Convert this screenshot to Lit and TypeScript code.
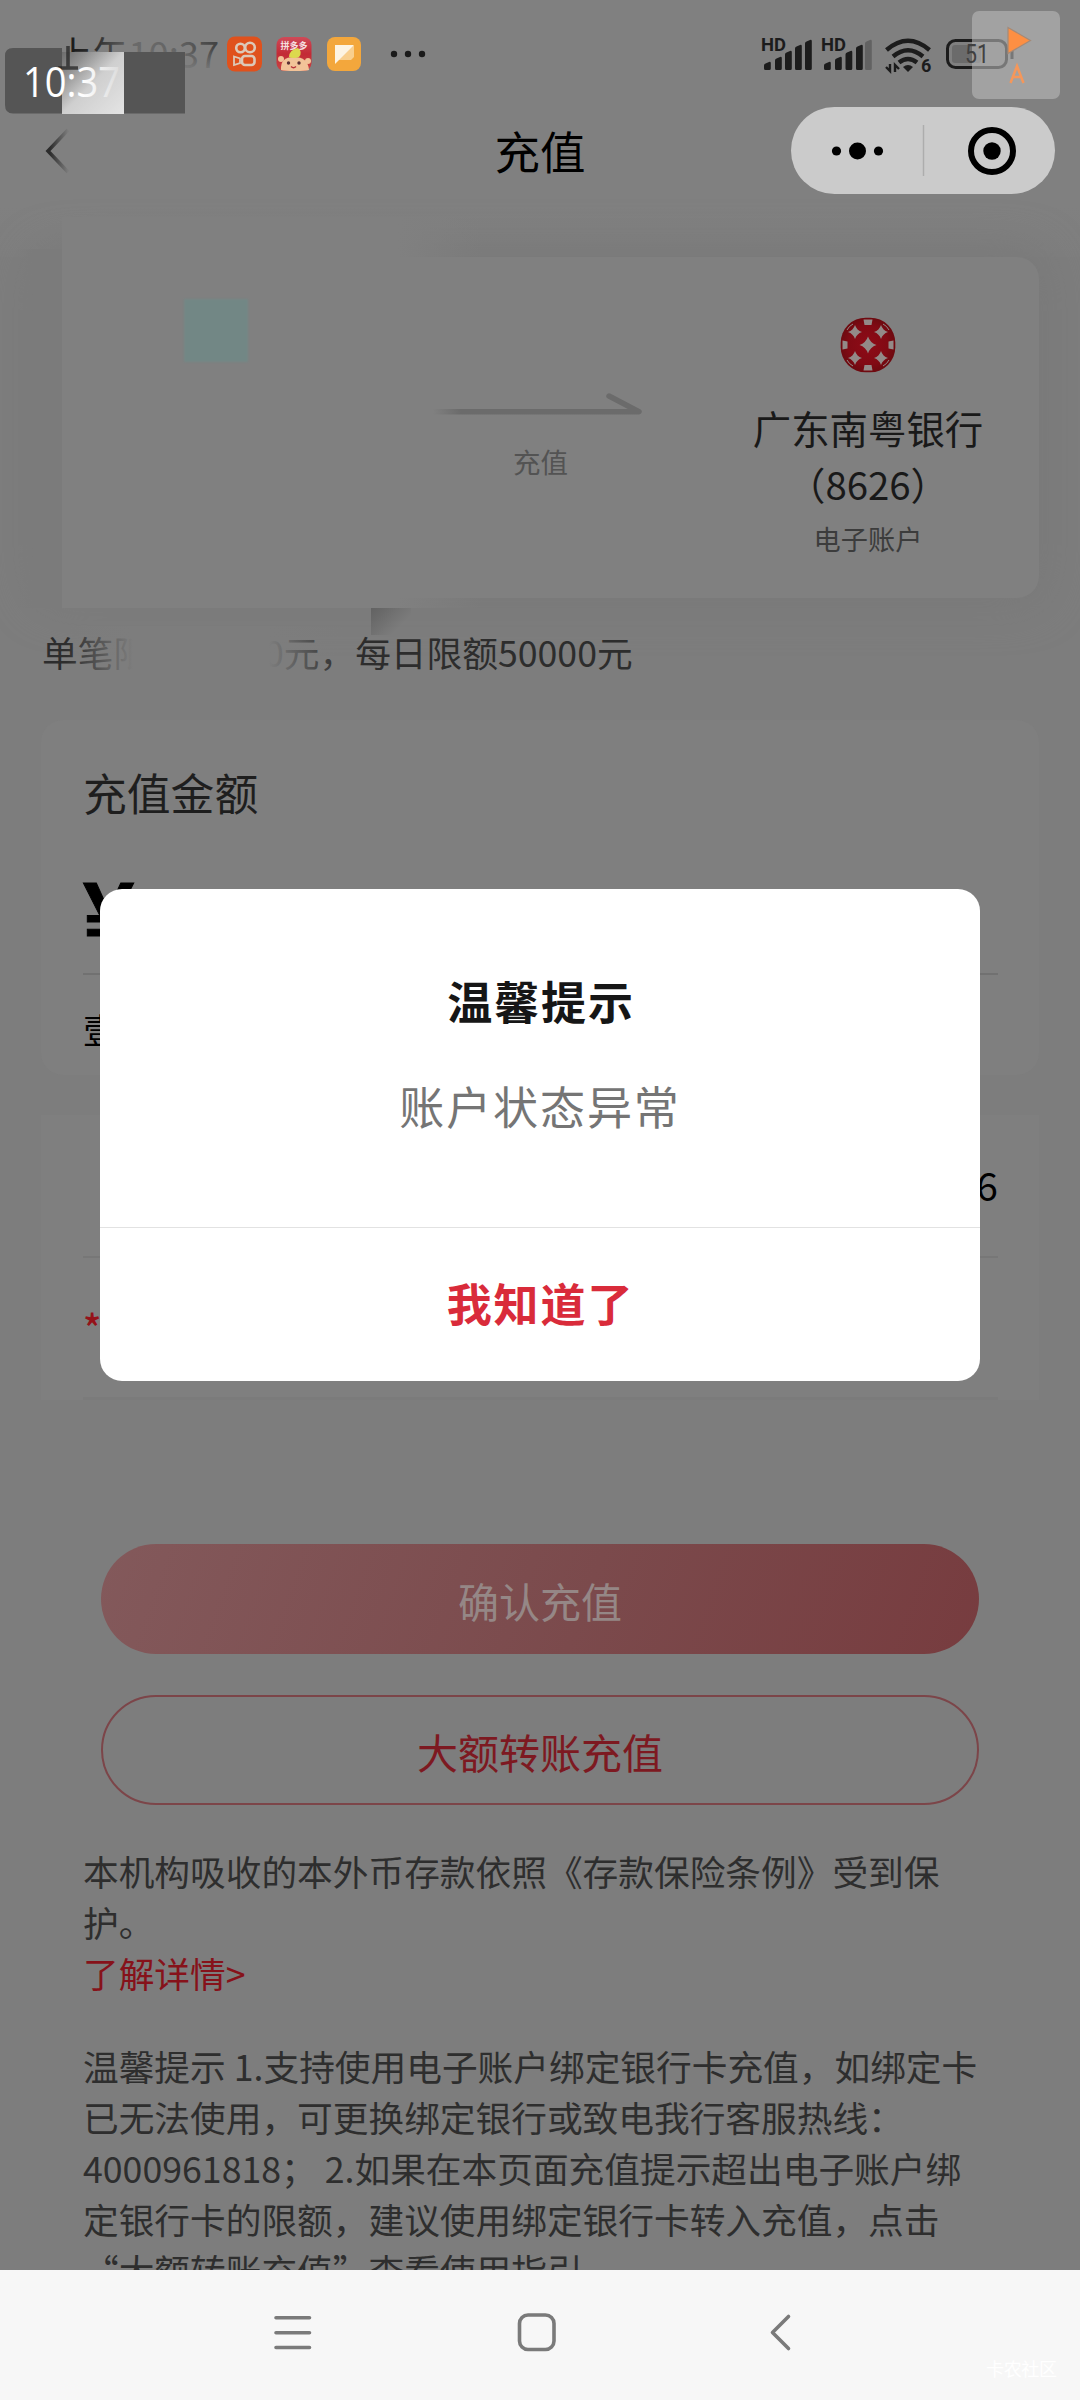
import { LitElement, html, css, svg } from "lit";
import { customElement } from "lit/decorators.js";

const bars = (x: number, widths: number[], faded: boolean) =>
  widths.map((dx, i) => {
    const top = [62, 57, 51, 45, 40][i];
    return svg`<path d="M${x + dx} 68.5V${top + 3.5}q0-1.5 1.5-2l3.5-1.5q1.8-.6 1.8 1.2v${68.5 - top - 1.2}q0 1.5-1.5 1.5h-3.8q-1.5 0-1.5-1.5z" fill=${faded && i === 4 ? "#626262" : "#1c1c1c"} />`;
  });

@customElement("status-bar")
export class StatusBar extends LitElement {
  static styles = css`
    :host { display: block; height: 106px; }
    svg { display: block; }
    text { font-family: Roboto, "Noto Sans CJK SC", sans-serif; }
    .clock { font: 36px "Noto Sans CJK SC", sans-serif; }
    .badge { font: 42px "Open Sans", "Noto Sans", sans-serif; }
    .hd { font: bold 18px Roboto, sans-serif; }
    .tiny { font: bold 9.5px "Noto Sans CJK SC", sans-serif; }
    .num { font: bold 18px Roboto, sans-serif; }
    .level { font: 25.5px Roboto, sans-serif; }
  `;
  render() {
    return html`
      <svg width="1080" height="120" viewBox="0 0 1080 120">
        <defs>
          <linearGradient id="clock" gradientUnits="userSpaceOnUse" x1="60" y1="0" x2="215" y2="0">
            <stop offset="0" stop-color="#111" /><stop offset=".25" stop-color="#333" />
            <stop offset=".48" stop-color="#6a6a6a" /><stop offset=".75" stop-color="#646464" /><stop offset="1" stop-color="#444" />
          </linearGradient>
          <linearGradient id="fade" x1="0" y1="0" x2="0" y2="1">
            <stop offset="0" stop-color="#808080" stop-opacity="0" /><stop offset="1" stop-color="#808080" />
          </linearGradient>
          <linearGradient id="patch" x1="0" y1="0" x2="1" y2="1">
            <stop offset="0" stop-color="#6c6c6c" /><stop offset=".2" stop-color="#8e8e8e" />
            <stop offset=".5" stop-color="#cfcfcf" /><stop offset="1" stop-color="#e4e4e4" />
          </linearGradient>
          <linearGradient id="badge" gradientUnits="userSpaceOnUse" x1="24" y1="0" x2="120" y2="0">
            <stop offset=".6" stop-color="#fff" /><stop offset="1" stop-color="#dcdcdc" />
          </linearGradient>
          <linearGradient id="pdd" x1="0" y1="0" x2="0" y2="1">
            <stop offset="0" stop-color="#cf4a58" /><stop offset=".5" stop-color="#c32a35" /><stop offset="1" stop-color="#c94545" />
          </linearGradient>
        </defs>
        <text class="clock" x="56" y="68" textLength="163" lengthAdjust="spacingAndGlyphs" fill="url(#clock)">上午10:37</text>
        <rect x="124" y="48" width="96" height="26" fill="url(#fade)" />
        <path d="M13 48H62V52H185V113.5H13Q5 113.5 5 105V56Q5 48 13 48z" fill="#555" />
        <rect x="62" y="52" width="62" height="62" fill="url(#patch)" />
        <path d="M68 46V67M58 68H78" stroke="#242424" stroke-width="3.600" fill="none" opacity=".75" />
        <text class="badge" x="23" y="96.500" textLength="97" lengthAdjust="spacingAndGlyphs" fill="url(#badge)">10:37</text>

        <rect x="227" y="36.500" width="35" height="35" rx="8" fill="#e0511c" />
        <g fill="none" stroke="#dcc9b8" stroke-width="2.600">
          <circle cx="240.500" cy="48" r="4.300" /><circle cx="250" cy="47.500" r="4.800" />
          <rect x="242" y="56" width="12.500" height="9" rx="3" />
        </g>
        <path d="M234 56.500l6 2v4.500l-6 2z" fill="none" stroke="#dcc9b8" stroke-width="1.800" />

        <rect x="276.500" y="37" width="35" height="34" rx="8" fill="url(#pdd)" />
        <text class="tiny" x="280.500" y="49" textLength="27" lengthAdjust="spacingAndGlyphs" fill="#f5dfe0">拼多多</text>
        <path d="M281 70q-1-13 13-13t15 13q-3 1-14 1t-14-1z" fill="#f2c398" />
        <circle cx="281" cy="59" r="3" fill="#f2c398" /><circle cx="308" cy="61" r="3" fill="#f2c398" />
        <path d="M289 57q0-7 9-9q5 4 1 9q-5 2-10 0z" fill="#dcd94e" />
        <circle cx="288.500" cy="63" r="1.700" fill="#5b3034" /><circle cx="299" cy="63" r="1.700" fill="#5b3034" />
        <path d="M291 66.500q2.500 2.500 5 0" stroke="#b7323a" stroke-width="1.300" fill="none" />

        <rect x="327" y="37" width="34" height="34" rx="8" fill="#f3a73c" />
        <path d="M335 46h19v11l-3 3h-16z" fill="#f9cf8e" /><path d="M335 45h19L335 64z" fill="#fdf4e3" />
        <g fill="#1a1a1a"><circle cx="394" cy="54" r="3.200" /><circle cx="408" cy="54" r="3.200" /><circle cx="422" cy="54" r="3.200" /></g>

        <text class="hd" x="761" y="50.500" textLength="25" lengthAdjust="spacingAndGlyphs" fill="#1c1c1c">HD</text>
        ${bars(764, [0, 11, 21, 31, 41], false)}
        <text class="hd" x="821" y="50.500" textLength="25" lengthAdjust="spacingAndGlyphs" fill="#1c1c1c">HD</text>
        ${bars(824, [0, 11, 21.5, 32, 41], true)}
        <g fill="none" stroke="#1c1c1c" stroke-width="4.400">
          <path d="M886.500 50q21.500-18.500 43 0" /><path d="M893 56.500q15-12.500 30 0" /><path d="M899 62.500q9-7 18 0" />
        </g>
        <path d="M903 67q5-4 10 0l-5 5z" fill="#1c1c1c" />
        <path d="M890 64v7l-4-4M895 72v-7l4 4" stroke="#1c1c1c" stroke-width="2.400" fill="none" />
        <text class="num" x="921" y="72" fill="#1c1c1c">6</text>
        <rect x="947.500" y="40.500" width="59" height="27" rx="8" fill="none" stroke="#1c1c1c" stroke-width="3" />
        <rect x="952" y="45" width="29" height="18" rx="3" fill="#6b6b6b" />
        <path d="M1012 50v9" stroke="#1c1c1c" stroke-width="3" />

        <rect x="972" y="11" width="88" height="88" rx="7" fill="#bababa" fill-opacity=".58" />
        <text class="level" x="965" y="63" textLength="24" lengthAdjust="spacingAndGlyphs" fill="#404040">51</text>
        <path d="M1008 27.500v26l22.500-13z" fill="#fd8f43" stroke="#a48a78" stroke-width="1.200" />
        <path d="M1010.500 83l6.500-17 6.500 17M1013 77h8" fill="none" stroke="#f5975a" stroke-width="2.500" />
      </svg>`;
  }
}

@customElement("nav-header")
export class NavHeader extends LitElement {
  static styles = css`
    :host { display: grid; grid-template-columns: 1fr auto 1fr; align-items: center; height: 89px; padding: 0 25px 0 42px; }
    .title { font-size: 45.500px; line-height: 60px; color: #000; margin: -2px 17px 0 0; }
    svg { display: block; }
    .back { margin-left: 2px; }
    .capsule { justify-self: end; width: 264px; height: 87px; border-radius: 44px; background: #cbcbcb; }
  `;
  render() {
    return html`
      <svg class="back" width="30" height="50" viewBox="0 0 30 50">
        <defs><linearGradient id="g"><stop offset=".1" stop-color="#2c2c2c" /><stop offset="1" stop-color="#7c7c7c" /></linearGradient></defs>
        <path d="M24 4L4 25l20 21" fill="none" stroke="url(#g)" stroke-width="3.600" />
      </svg>
      <div class="title">充值</div>
      <div class="capsule">
        <svg width="264" height="87" viewBox="0 0 264 87">
          <circle cx="45.500" cy="44" r="4.600" /><circle cx="66.500" cy="44" r="8.500" /><circle cx="87.500" cy="44" r="4.600" />
          <path d="M132.500 18v51" stroke="#adadad" stroke-width="1.500" />
          <circle cx="201" cy="44" r="21" fill="none" stroke="#000" stroke-width="6" /><circle cx="201" cy="44" r="8.700" />
        </svg>
      </div>`;
  }
}

@customElement("bank-card")
export class BankCard extends LitElement {
  static styles = css`
    :host { display: grid; flex: none; grid-template-columns: 368px 270px 1fr; height: 341px; margin: 0 41px; border-radius: 22px; background: #808080; box-shadow: 0 0 44px 6px #797979; position: relative; }
    .edge { position: absolute; left: -24px; top: -8px; width: 45px; height: 359px; background: linear-gradient(90deg, #7b7b7b00, #7b7b7b 35%); }
    .cover { position: absolute; left: 21px; top: -40px; width: 420px; height: 391px; background: linear-gradient(90deg, #808080 80%, #80808000); }
    .swatch { position: absolute; left: 143px; top: 42px; width: 64px; height: 63px; background: #728785; filter: blur(1px); }
    .smudge { position: absolute; left: 330px; top: 351px; width: 40px; height: 27px; background: linear-gradient(135deg, #626262, #79797900 70%); }
    .middle { position: relative; grid-column: 2; display: flex; flex-direction: column; align-items: center; padding-top: 133px; }
    .middle svg { margin-left: -11px; }
    .caption { font-size: 27.500px; line-height: 40px; color: #535353; margin-top: 21px; margin-left: -7px; }
    .bank { position: relative; display: flex; flex-direction: column; align-items: center; padding: 60px 0 0 18px; text-align: center; }
    .name { font-size: 38.400px; line-height: 55.500px; color: #191919; margin-top: 27px; }
    .kind { font-size: 27.200px; line-height: 40px; color: #3c3c3c; margin-top: 7px; }
    svg { display: block; }
  `;
  render() {
    const star = (x: number, y: number, r: number) =>
      svg`<path d="M${x} ${y - r}Q${x + r * 0.25} ${y - r * 0.25} ${x + r} ${y}Q${x + r * 0.25} ${y + r * 0.25} ${x} ${y + r}Q${x - r * 0.25} ${y + r * 0.25} ${x - r} ${y}Q${x - r * 0.25} ${y - r * 0.25} ${x} ${y - r}z" />`;
    return html`
      <div class="edge"></div><div class="cover"></div><div class="swatch"></div><div class="smudge"></div>
      <div class="middle">
        <svg width="212" height="30" viewBox="0 0 212 30">
          <defs><linearGradient id="a" gradientUnits="userSpaceOnUse" x1="0" y1="0" x2="28" y2="0"><stop offset="0" stop-color="#808080" /><stop offset="1" stop-color="#6b6b6b" /></linearGradient></defs>
          <path d="M176 6l30 15.700H0" fill="none" stroke="url(#a)" stroke-width="5.500" stroke-linecap="round" stroke-linejoin="round" />
        </svg>
        <div class="caption">充值</div>
      </div>
      <div class="bank">
        <svg width="56" height="56" viewBox="0 0 56 56">
          <defs><radialGradient id="r"><stop offset="0" stop-color="#8e0b17" /><stop offset=".7" stop-color="#820a14" /><stop offset="1" stop-color="#6e0a10" /></radialGradient></defs>
          <rect x=".7" y=".7" width="54.600" height="54.600" rx="25" fill="url(#r)" />
          <g fill="#938a88">
            ${star(28, 28, 8.5)} ${star(15, 15, 7)} ${star(41, 15, 7)} ${star(15, 41, 7)} ${star(41, 41, 7)}
            <path d="M23.500 2.500h9l-1 5.500h-7zM23.500 53.500h9l-1-5.500h-7zM2.500 23.500v9l5-1v-7zM53.500 23.500v9l-5-1v-7z" />
          </g>
          <g fill="none" stroke="#938a88" stroke-width="1"><path d="M7 13q2-4 6-6M49 13q-2-4-6-6M7 43q2 4 6 6M49 43q-2 4-6 6" /></g>
        </svg>
        <div class="name">广东南粤银行<br />（8626）</div>
        <div class="kind">电子账户</div>
      </div>`;
  }
}

@customElement("tip-dialog")
export class TipDialog extends LitElement {
  static styles = css`
    :host { display: flex; flex-direction: column; text-align: center; letter-spacing: 1.900px; font-size: 45px; border-radius: 22px; background: #fff; overflow: hidden; }
    .body { height: 339px; box-sizing: border-box; padding-top: 77px; border-bottom: 1.500px solid #e2e2e2; }
    .title { font-weight: 700; color: #161616; line-height: 70px; padding-left: 2px; }
    .message { color: #757575; line-height: 70px; margin-top: 35px; }
    .ok { flex: 1; font-weight: 700; color: #d92b3a; line-height: 149px; padding-left: 1px; }
  `;
  render() {
    return html`<div class="body"><div class="title">温馨提示</div><div class="message">账户状态异常</div></div><div class="ok">我知道了</div>`;
  }
}

@customElement("system-nav")
export class SystemNav extends LitElement {
  static styles = css`
    :host { display: block; height: 130px; background: #f7f7f7; }
    svg { display: block; }
    text { font: 18px "Noto Sans CJK SC", sans-serif; }
  `;
  render() {
    return html`
      <svg width="1080" height="130" viewBox="0 0 1080 130">
        <g fill="none" stroke="#7a7a7a" stroke-width="3.600" stroke-linecap="round" stroke-linejoin="round">
          <path d="M276 47.700h33.500M276 62.700h33.500M276 77.500h33.500" />
          <rect x="519.500" y="45" width="34.500" height="34.500" rx="8.500" />
          <path d="M788.500 46.500L772.500 62.500l16 16" />
        </g>
        <text x="986" y="106" textLength="71" fill="#fff">卡农社区</text>
      </svg>`;
  }
}

@customElement("app-root")
export class AppRoot extends LitElement {
  static styles = css`
    :host { display: block; position: relative; width: 1080px; height: 2400px; overflow: hidden; font-family: "Noto Sans CJK SC", sans-serif; background: #7d7d7d; }
    .screen { display: flex; flex-direction: column; height: 2270px; overflow: hidden; }
    .top { height: 257px; flex: none; box-sizing: border-box; background: linear-gradient(#808080 80%, #7e7e7e); }
    .limit { position: relative; flex: none; margin: 29px 0 0 42px; height: 50px; font-size: 35.700px; line-height: 50px; color: #2d2d2d; white-space: nowrap; }
    .veil { position: absolute; left: 24px; top: -1px; width: 278px; height: 60px; background: linear-gradient(90deg, #7d7d7d00, #7d7d7d 24%, #7d7d7d 73%, #7d7d7d00); }
    .amount { flex: none; height: 355px; margin: 43px 41px 0; box-sizing: border-box; padding: 40px 41px 0 42px; border-radius: 22px; background: #7f7f7f; }
    .label { font-size: 43.800px; line-height: 64px; color: #1e1e1e; }
    .yen { height: 106px; box-sizing: border-box; border-bottom: 2px solid #717171; font: bold 92px/92px "Liberation Sans", sans-serif; color: #000; margin-top: 45px; -webkit-text-stroke: 1px #000; }
    .words { font-size: 35.600px; line-height: 50px; margin-top: 29px; color: #000; }
    .details { flex: none; height: 285px; margin: 40px 41px 0; box-sizing: border-box; padding: 0 41px 0 42px; background: #7f7f7f; }
    .account { height: 143px; box-sizing: border-box; border-bottom: 2px solid #777; text-align: right; font-size: 39px; line-height: 138px; color: #000; }
    .required { height: 142px; box-sizing: border-box; border-bottom: 3px solid #7b7b7b; font: 500 38px/138px "Noto Sans CJK SC", sans-serif; color: #951219; }
    .button { flex: none; box-sizing: border-box; height: 110px; margin: 0 101px; border-radius: 55px; text-align: center; font-size: 41px; line-height: 112px; }
    .primary { margin-top: 144px; background: linear-gradient(110deg, #83595b, #7b4a4c 55%, #773c3f); color: #958786; }
    .outline { margin-top: 41px; border: 2px solid #7c4549; line-height: 109px; color: #7d1921; }
    .notes { flex: none; margin: 40px 80px 0 83px; font-size: 35.700px; line-height: 51px; color: #2e2e2e; white-space: nowrap; }
    .link { color: #86121a; }
    .tips { margin-top: 42px; }
    tip-dialog { position: absolute; left: 100px; top: 889px; width: 880px; height: 492px; }
  `;
  render() {
    return html`
      <div class="screen">
        <div class="top"><status-bar></status-bar><nav-header></nav-header></div>
        <bank-card></bank-card>
        <div class="limit">单笔限额50000元，每日限额50000元<div class="veil"></div></div>
        <div class="amount">
          <div class="label">充值金额</div>
          <div class="yen">¥</div>
          <div class="words">壹</div>
        </div>
        <div class="details">
          <div class="account">6</div>
          <div class="required">*</div>
        </div>
        <div class="button primary">确认充值</div>
        <div class="button outline">大额转账充值</div>
        <div class="notes">
          <div>本机构吸收的本外币存款依照《存款保险条例》受到保<br />护。</div>
          <div class="link">了解详情&gt;</div>
          <div class="tips">温馨提示 1.支持使用电子账户绑定银行卡充值，如绑定卡<br />已无法使用，可更换绑定银行或致电我行客服热线：<br />4000961818； 2.如果在本页面充值提示超出电子账户绑<br />定银行卡的限额，建议使用绑定银行卡转入充值，点击<br />“大额转账充值”查看使用指引</div>
        </div>
      </div>
      <system-nav></system-nav>
      <tip-dialog></tip-dialog>`;
  }
}
